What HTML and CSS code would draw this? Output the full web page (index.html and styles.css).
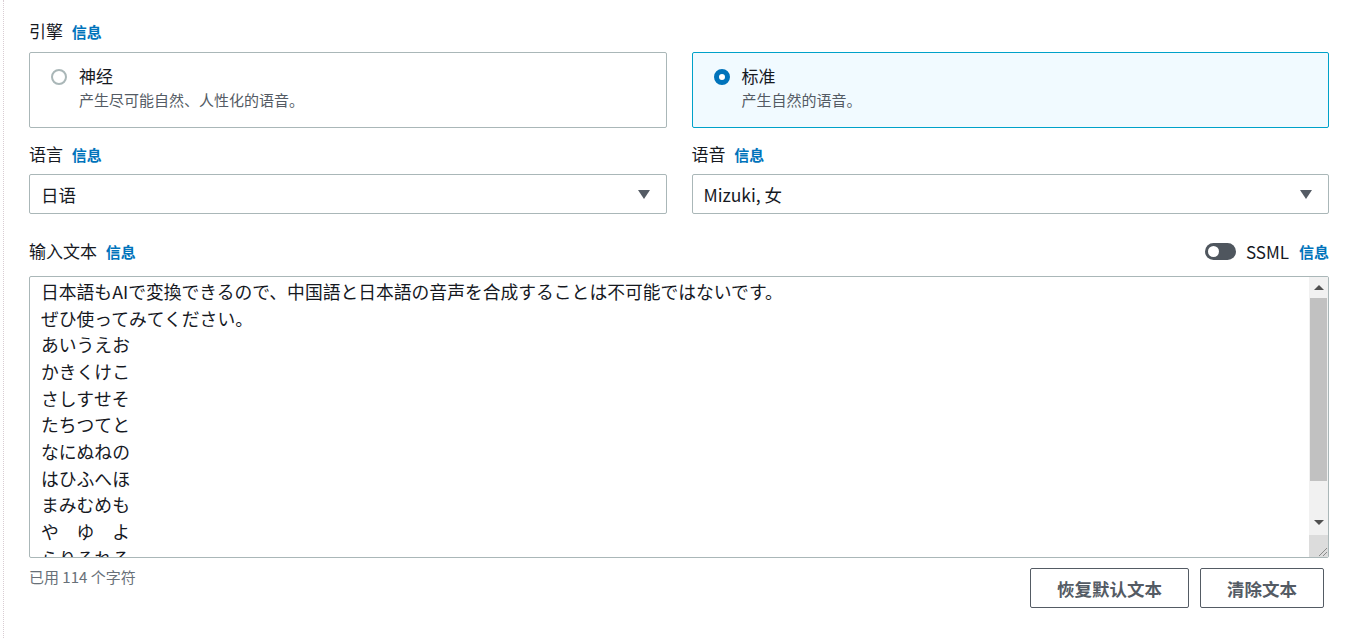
FILE: index.html
```html
<!DOCTYPE html>
<html lang="zh-CN">
<head>
    <meta charset="UTF-8">
    <title>Polly - 文本转语音</title>
    <link rel="stylesheet" href="styles.css">
</head>
<body>
    <div class="panel">
        <div class="field-label">引擎 <a class="info">信息</a></div>
        <div class="engine-grid">
            <div class="radio-card">
                <span class="radio"></span>
                <div class="radio-text">
                    <div class="radio-title">神经</div>
                    <div class="radio-desc">产生尽可能自然、人性化的语音。</div>
                </div>
            </div>
            <div class="radio-card selected">
                <span class="radio checked"></span>
                <div class="radio-text">
                    <div class="radio-title">标准</div>
                    <div class="radio-desc">产生自然的语音。</div>
                </div>
            </div>
        </div>

        <div class="select-grid">
            <div>
                <div class="field-label">语言 <a class="info">信息</a></div>
                <div class="select">
                    <span>日语</span>
                    <span class="caret"></span>
                </div>
            </div>
            <div>
                <div class="field-label">语音 <a class="info">信息</a></div>
                <div class="select">
                    <span>Mizuki, 女</span>
                    <span class="caret"></span>
                </div>
            </div>
        </div>

        <div class="text-header">
            <div class="field-label">输入文本 <a class="info">信息</a></div>
            <div class="ssml">
                <span class="toggle"><span class="knob"></span></span>
                <span class="ssml-name">SSML</span>
                <a class="info">信息</a>
            </div>
        </div>

        <div class="textbox">
            <div class="textbox-content">
                <div>日本語もAIで変換できるので、中国語と日本語の音声を合成することは不可能ではないです。</div>
                <div>ぜひ使ってみてください。</div>
                <div>あいうえお</div>
                <div>かきくけこ</div>
                <div>さしすせそ</div>
                <div>たちつてと</div>
                <div>なにぬねの</div>
                <div>はひふへほ</div>
                <div>まみむめも</div>
                <div>や　ゆ　よ</div>
                <div>らりるれろ</div>
            </div>
            <div class="scrollbar">
                <span class="scroll-btn"><span class="arrow-up"></span></span>
                <span class="scroll-track"><span class="scroll-thumb"></span></span>
                <span class="scroll-btn"><span class="arrow-down"></span></span>
                <span class="scroll-corner">
                    <svg width="12" height="12" viewBox="0 0 12 12"><path d="M11 3 L3 11 M11 7 L7 11" stroke="#8a8a8a" stroke-width="1" fill="none"/></svg>
                </span>
            </div>
        </div>

        <div class="footer-row">
            <div class="char-count">已用 114 个字符</div>
            <div class="actions">
                <button class="btn">恢复默认文本</button>
                <button class="btn">清除文本</button>
            </div>
        </div>
    </div>
</body>
</html>
```

FILE: styles.css
```css
:root {
    --text: #16191f;
    --text-secondary: #545b64;
    --muted: #687078;
    --link: #0073bb;
    --border: #aab7b8;
    --selected-border: #00a1c9;
    --selected-bg: #f1faff;
}

body {
    margin: 0 0 0 3px;
    padding: 20px 0 0 25px;
    min-height: 100vh;
    box-sizing: border-box;
    border-left: 1px dotted #d9cdd3;
    background: #ffffff;
    color: var(--text);
    font-family: "Noto Sans CJK SC", "Noto Sans", sans-serif;
}

.panel {
    width: 1300px;
}

.field-label {
    font-size: 17px;
    line-height: 22px;
    color: var(--text);
}

.info {
    margin-left: 5px;
    font-size: 15px;
    font-weight: bold;
    color: var(--link);
    cursor: pointer;
}

/* engine cards */
.engine-grid,
.select-grid {
    display: grid;
    grid-template-columns: 1fr 1fr;
    gap: 25px;
}

.engine-grid {
    margin-top: 9px;
}

.radio-card {
    display: flex;
    gap: 12px;
    height: 76px;
    box-sizing: border-box;
    padding: 14px 20px 0 21px;
    border: 1px solid var(--border);
    border-radius: 2px;
}

.radio-card.selected {
    border-color: var(--selected-border);
    background-color: var(--selected-bg);
}

.radio {
    flex: none;
    width: 16px;
    height: 16px;
    box-sizing: border-box;
    border: 2px solid var(--border);
    border-radius: 50%;
    background: #ffffff;
    margin-top: 2px;
}

.radio.checked {
    border: 5px solid var(--link);
}

.radio-title {
    font-size: 17px;
    line-height: 20px;
    margin-top: -1px;
}

.radio-desc {
    margin-top: 4px;
    font-size: 15px;
    line-height: 20px;
    color: var(--text-secondary);
}

/* selects */
.select-grid {
    margin-top: 15px;
}

.select {
    margin-top: 8px;
    height: 40px;
    box-sizing: border-box;
    padding: 0 16px 0 11px;
    border: 1px solid var(--border);
    border-radius: 2px;
    display: flex;
    align-items: center;
    justify-content: space-between;
    font-size: 17.5px;
}

.caret {
    width: 0;
    height: 0;
    border-left: 6px solid transparent;
    border-right: 6px solid transparent;
    border-top: 9px solid var(--text-secondary);
}

/* input text */
.text-header {
    margin-top: 26px;
    display: flex;
    justify-content: space-between;
    align-items: center;
}

.ssml {
    display: flex;
    align-items: center;
    font-size: 17px;
    line-height: 22px;
}

.toggle {
    width: 31px;
    height: 17px;
    border-radius: 9px;
    background: #4f565e;
    display: flex;
    align-items: center;
    padding-left: 3px;
    box-sizing: border-box;
    margin-right: 10px;
}

.knob {
    width: 11px;
    height: 11px;
    border-radius: 50%;
    background: #ffffff;
}

.ssml-name {
    color: var(--text);
    margin-right: 5px;
}

.textbox {
    margin-top: 13px;
    height: 282px;
    box-sizing: border-box;
    border: 1px solid var(--border);
    border-radius: 2px;
    display: flex;
    overflow: hidden;
}

.textbox-content {
    flex: 1;
    padding: 1px 11px 0;
    font-family: "Noto Sans CJK JP", "Noto Sans CJK SC", sans-serif;
    font-size: 17.8px;
    line-height: 26.67px;
    color: var(--text);
    overflow: hidden;
}

.scrollbar {
    width: 19px;
    display: flex;
    flex-direction: column;
    background: #f1f1f1;
}

.scroll-btn {
    height: 21px;
    display: flex;
    align-items: center;
    justify-content: center;
}

.arrow-up {
    border-left: 5px solid transparent;
    border-right: 5px solid transparent;
    border-bottom: 5px solid #505050;
}

.arrow-down {
    border-left: 5px solid transparent;
    border-right: 5px solid transparent;
    border-top: 5px solid #505050;
}

.scroll-track {
    flex: 1;
    padding: 0 1px;
}

.scroll-thumb {
    display: block;
    height: 183px;
    background: #c1c1c1;
}

.scroll-corner {
    height: 22px;
    margin-top: 2px;
    background: #dcdcdc;
    display: flex;
    align-items: flex-end;
    justify-content: flex-end;
}

/* footer */
.footer-row {
    display: flex;
    justify-content: space-between;
    align-items: flex-start;
}

.char-count {
    margin-top: 8px;
    font-size: 15px;
    line-height: 22px;
    color: var(--muted);
}

.actions {
    display: flex;
    gap: 11px;
    margin-top: 10px;
    margin-right: 5px;
}

.btn {
    height: 40px;
    padding: 0 26px;
    background: #ffffff;
    border: 1px solid var(--text-secondary);
    border-radius: 2px;
    font-family: "Noto Sans CJK SC", sans-serif;
    font-size: 17.5px;
    font-weight: bold;
    color: var(--text-secondary);
    cursor: pointer;
}
```
